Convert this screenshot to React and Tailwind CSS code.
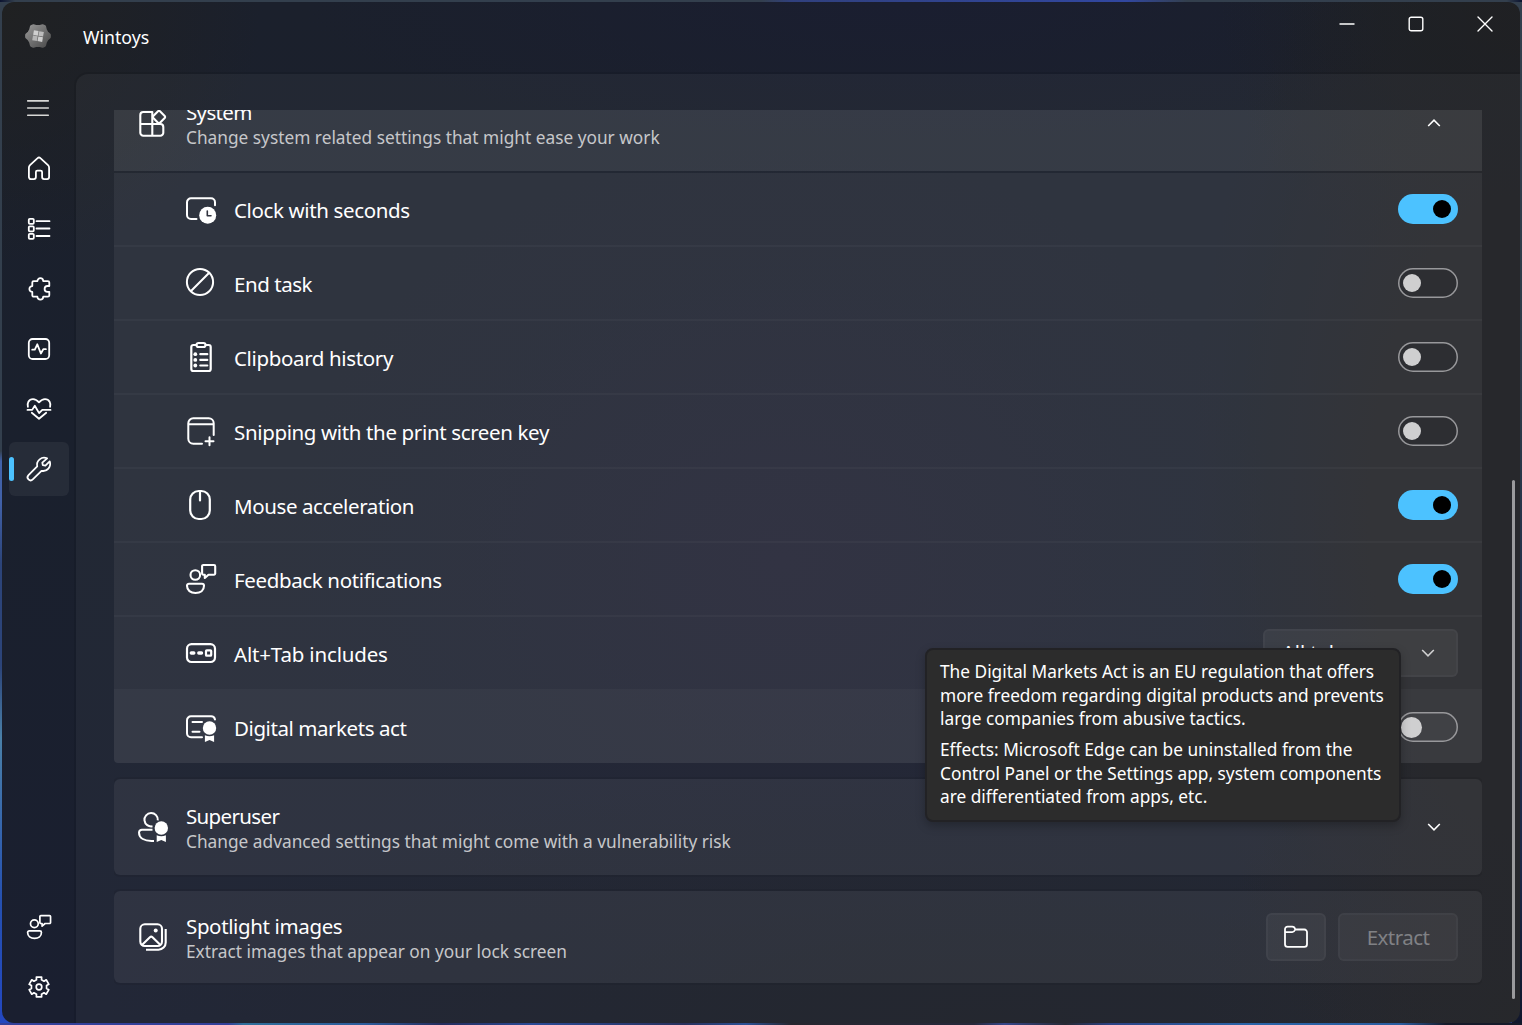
import clsx from 'clsx'

function Icon({ size = 32, box = 32, stroke = 2, className, children }) {
  return (
    <svg
      width={size}
      height={size}
      viewBox={`0 0 ${box} ${box}`}
      fill="none"
      stroke="currentColor"
      strokeWidth={stroke}
      strokeLinecap="round"
      strokeLinejoin="round"
      className={clsx('shrink-0', className)}
    >
      {children}
    </svg>
  )
}

function NavIcon({ children, stroke = 1.8 }) {
  return <Icon size={28} box={28} stroke={stroke}>{children}</Icon>
}

// Six-toothed gear outline around (cx, cy)
function gearPath(cx, cy, outer, inner, start, tip, root) {
  const points = []
  for (let i = 0; i < 6; i++) {
    const mid = start + i * 60
    const corners = [[mid - root, inner], [mid - tip, outer], [mid + tip, outer], [mid + root, inner]]
    corners.forEach(([deg, r]) => {
      const a = (deg * Math.PI) / 180
      points.push(`${(cx + r * Math.cos(a)).toFixed(2)} ${(cy + r * Math.sin(a)).toFixed(2)}`)
    })
  }
  return `M${points.join('L')}Z`
}

/* ---------- row icons ---------- */

const ClockIcon = () => (
  <Icon>
    <path d="M11.5 26H6a4 4 0 0 1-4-4V9.3a4 4 0 0 1 4-4h20a4 4 0 0 1 4 4v3" />
    <circle cx="22.7" cy="22.3" r="8.5" fill="currentColor" stroke="none" />
    <path d="M22.3 18v4.8h3.7" stroke="#30333e" strokeWidth="1.6" />
  </Icon>
)

const BlockedIcon = () => (
  <Icon>
    <circle cx="15" cy="15" r="13.1" />
    <path d="M6 24 24.2 5.8" />
  </Icon>
)

const ClipboardIcon = () => (
  <Icon stroke={2.2}>
    <path d="M11 4H8.3a2 2 0 0 0-2 2v22a2 2 0 0 0 2 2h15.4a2 2 0 0 0 2-2V6a2 2 0 0 0-2-2H21" />
    <rect x="11.5" y="2" width="9" height="4" rx="2" />
    <path d="M15.3 13.2h7M15.3 18.9h7M15.3 24.5h7" />
    <g fill="currentColor" stroke="none">
      <circle cx="10.3" cy="13.2" r="1.9" />
      <circle cx="10.3" cy="18.9" r="1.9" />
      <circle cx="10.3" cy="24.5" r="1.9" />
    </g>
  </Icon>
)

const SnipIcon = () => (
  <Icon>
    <path d="M17 28.7H8.3a5 5 0 0 1-5-5V8.3a5 5 0 0 1 5-5h15.4a5 5 0 0 1 5 5V20M3.3 9.3h25.4" />
    <path d="M24.5 22.3v8M20.5 26.3h8" />
  </Icon>
)

const MouseIcon = () => (
  <Icon stroke={2.2}>
    <rect x="5.2" y="2" width="19.6" height="28" rx="8.5" />
    <path d="M15 2.5v9" />
  </Icon>
)

function FeedbackIcon({ size = 32 }) {
  return (
    <Icon size={size} stroke={2.1}>
      <circle cx="10.3" cy="12" r="4.8" />
      <path d="M4 20.7h13a2 2 0 0 1 2 2c0 4.6-3.6 7.3-8.5 7.3S2 27.3 2 22.7a2 2 0 0 1 2-2z" />
      <path d="M18.3 2H29a1.2 1.2 0 0 1 1.2 1.2v7.3a1.2 1.2 0 0 1-1.2 1.2h-5.5L19.8 15v-3.3h-1.5a1.2 1.2 0 0 1-1.2-1.2V3.2A1.2 1.2 0 0 1 18.3 2z" />
    </Icon>
  )
}

const AltTabIcon = () => (
  <Icon stroke={2.2}>
    <rect x="2" y="7.2" width="28" height="17.8" rx="4.5" />
    <path d="M6.3 16h2.5M13.8 16h2.7" strokeWidth="3.4" />
    <rect x="21" y="13.3" width="5.2" height="5.4" rx=".8" />
  </Icon>
)

function Ribbon({ cx }) {
  return (
    <g fill="currentColor" stroke="none">
      <circle cx={cx} cy="17" r="6.7" />
      <path d={`M${cx - 4.6} 24.3q4.6 1.8 9.2 0v6.6l-4.6-2-4.6 2z`} />
    </g>
  )
}

const CertificateIcon = () => (
  <Icon>
    <path d="M17 26.3H6a4 4 0 0 1-4-4v-13a4 4 0 0 1 4-4h20a4 4 0 0 1 4 3.2" />
    <path d="M7.5 11H17M7.5 20.7h7" />
    <Ribbon cx={24.5} />
  </Icon>
)

/* ---------- card icons ---------- */

const AppsIcon = () => (
  <Icon stroke={2.1}>
    <path d="M15.3 5h-9a3 3 0 0 0-3 3v17.7a3 3 0 0 0 3 3h17a3 3 0 0 0 3-3V20a3 3 0 0 0-3-3h-20M15.3 5v23.7" />
    <path d="m21 4.3-4.7 4.7a1.4 1.4 0 0 0 0 2l4.7 4.7a1.4 1.4 0 0 0 2 0l4.7-4.7a1.4 1.4 0 0 0 0-2L23 4.3a1.4 1.4 0 0 0-2 0z" />
  </Icon>
)

const SuperuserIcon = () => (
  <Icon>
    <path d="M15.5 15.3a6.7 6.7 0 1 1 5.3-6" strokeLinecap="butt" />
    <path d="M15.5 18.8H5a3 3 0 0 0-3 2.7c0 6 6 8.5 12.5 8.5H17" strokeLinecap="butt" />
    <Ribbon cx={24.3} />
  </Icon>
)

const ImagesIcon = () => (
  <Icon stroke={2.1}>
    <rect x="3.3" y="3.3" width="21.7" height="21.7" rx="4.5" />
    <path d="m5.2 23.8 7.7-7.6a1.9 1.9 0 0 1 2.6 0l7.7 7.6" />
    <circle cx="18.7" cy="9.6" r="2" fill="currentColor" stroke="none" />
    <path d="M28.7 8v13.5a7.2 7.2 0 0 1-7.2 7.2H9" strokeLinecap="butt" />
  </Icon>
)

const FolderIcon = () => (
  <NavIcon>
    <path d="M3 9.1V6.3a2.6 2.6 0 0 1 2.6-2.6h4.6c1.6 0 2.5.6 3.1 2.8h9.1A2.6 2.6 0 0 1 25 9.1v12.2a2.6 2.6 0 0 1-2.6 2.6H5.6A2.6 2.6 0 0 1 3 21.3V9.1h7.3c1.5 0 2.3-1 3-2.6" />
  </NavIcon>
)

function Chevron({ up, className }) {
  return (
    <svg
      width="14"
      height="14"
      viewBox="0 0 14 14"
      fill="none"
      stroke="currentColor"
      strokeWidth="1.6"
      className={clsx('shrink-0', className)}
    >
      <path d={up ? 'M1.2 10 7 4.2l5.8 5.8' : 'M1.2 4 7 9.8 12.8 4'} />
    </svg>
  )
}

/* ---------- navigation ---------- */

const HomeIcon = () => (
  <NavIcon>
    <path d="M12.6 3.2a2 2 0 0 1 2.8 0l7.6 6.9a3.5 3.5 0 0 1 1.1 2.6v9.4a2 2 0 0 1-2 2h-3a2 2 0 0 1-2-2v-5a1.5 1.5 0 0 0-1.5-1.5h-3.2a1.5 1.5 0 0 0-1.5 1.5v5a2 2 0 0 1-2 2h-3a2 2 0 0 1-2-2v-9.4A3.5 3.5 0 0 1 5 10.1z" />
  </NavIcon>
)

const ListIcon = () => (
  <NavIcon>
    <rect x="3.8" y="3.8" width="5" height="5" rx="1" />
    <rect x="3.8" y="11.3" width="5" height="5" rx="1" />
    <rect x="3.8" y="18.8" width="5" height="5" rx="1" />
    <path d="M11.5 6.2h13M11.5 13.5h13M11.5 21h13" />
  </NavIcon>
)

const PuzzleIcon = () => (
  <NavIcon>
    <path d="M12.4 6.1a2.9 2.9 0 0 1 5.8 0h4.6a1.5 1.5 0 0 1 1.5 1.5v3.4h-1.800a2.900 2.900 0 0 0 0 5.800h1.800v3.400a1.500 1.500 0 0 1-1.500 1.500h-4.600a2.900 2.900 0 1 1-5.800 0H8.800a1.500 1.500 0 0 1-1.500-1.500v-3.300a2.900 2.900 0 0 1 0-5.800V7.600a1.500 1.500 0 0 1 1.500-1.500z" />
  </NavIcon>
)

const PulseIcon = () => (
  <NavIcon>
    <rect x="3.8" y="4" width="20.4" height="20" rx="3.8" />
    <path d="M7.2 14.7h2.6l2.5-5.4 3.6 9.2 2.4-4.3h2.6" />
  </NavIcon>
)

const HeartIcon = () => (
  <NavIcon>
    <path d="M2.9 11.8C2 8.6 3.4 4.2 8 4.2c3 0 4.6 1.6 6 3.2 1.4-1.6 3-3.2 6-3.2 4.6 0 6 4.4 5.1 7.6" />
    <path d="M2.5 14.9h4.7l2.6-4.2 4.3 7.4 3.2-3.2h8.2" />
    <path d="m6.8 17.8 7.2 5.9 7.2-5.9" />
  </NavIcon>
)

const WrenchIcon = () => (
  <NavIcon>
    <path d="M22.1 3.4a7.1 7.1 0 0 0-9.9 8l-8.7 8.7a3 3 0 0 0 4.3 4.3l8.7-8.6a7.1 7.1 0 0 0 8.2-9.4l-4.3 4.2-2.6-.4-.5-2.6z" />
  </NavIcon>
)

const SettingsIcon = () => (
  <NavIcon stroke={1.7}>
    <path d={gearPath(14, 14, 10.2, 7.7, 30, 15, 19)} />
    <circle cx="14" cy="14" r="2.8" />
  </NavIcon>
)

function NavItem({ active, children }) {
  return (
    <button
      className={clsx(
        'relative flex h-[54px] w-[60px] items-center justify-center rounded-md',
        active && 'bg-white/[.055]'
      )}
    >
      {active && <span className="absolute top-[15px] left-0 h-6 w-[5px] rounded-full bg-[#4cc2ff]" />}
      {children}
    </button>
  )
}

function Sidebar() {
  return (
    <nav className="flex w-[74px] shrink-0 flex-col justify-between pt-[7px] pb-[9px] pl-[7px]">
      <div className="flex flex-col gap-1.5">
        <button className="mb-px flex h-[54px] w-[58px] items-center justify-center text-[#d8d8d6]">
          <Icon size={24} box={24} stroke={1.6}>
            <path d="M1.7 4.9h20.6M1.7 12h20.6M1.7 19.2h20.6" />
          </Icon>
        </button>
        <NavItem><HomeIcon /></NavItem>
        <NavItem><ListIcon /></NavItem>
        <NavItem><PuzzleIcon /></NavItem>
        <NavItem><PulseIcon /></NavItem>
        <NavItem><HeartIcon /></NavItem>
        <NavItem active><WrenchIcon /></NavItem>
      </div>
      <div className="flex flex-col gap-1.5">
        <NavItem><FeedbackIcon size={26} /></NavItem>
        <NavItem><SettingsIcon /></NavItem>
      </div>
    </nav>
  )
}

function Logo() {
  return (
    <svg width="28" height="28" viewBox="0 0 28 28" className="mb-1 shrink-0">
      <defs>
        <linearGradient id="logo" x1="0" y1="0" x2="1" y2="1">
          <stop offset="0" stopColor="#949494" />
          <stop offset="1" stopColor="#4c4c4c" />
        </linearGradient>
      </defs>
      <path
        d={gearPath(14, 14, 11.2, 9.3, 0, 5, 21)}
        fill="url(#logo)"
        stroke="url(#logo)"
        strokeWidth="3.4"
        strokeLinejoin="round"
      />
      <g fill="#cfcfcf" transform="rotate(10 14 14)">
        <rect x="9" y="9" width="4.7" height="4.7" />
        <rect x="14.4" y="9" width="4.7" height="4.7" fill="#bdbdbd" />
        <rect x="9" y="14.4" width="4.7" height="4.7" fill="#b5b5b5" />
        <rect x="14.4" y="14.4" width="4.7" height="4.7" />
      </g>
    </svg>
  )
}

function TitleBar() {
  return (
    <header className="flex h-[72px] shrink-0 justify-between pr-7 pl-[22px]">
      <div className="flex items-center">
        <Logo />
        <span className="mb-0.5 ml-[31px] text-[17.7px]">Wintoys</span>
      </div>
      <div className="mt-[13.5px] -mr-[0.5px] flex gap-[53px]">
        <Icon size={16} box={16} stroke={1.4}><path d="M.5 8h15" strokeLinecap="butt" /></Icon>
        <Icon size={16} box={16} stroke={1.4}><rect x="1.2" y="1.2" width="13.6" height="13.6" rx="2" /></Icon>
        <Icon size={16} box={16} stroke={1.4}><path d="m1 1 14 14M15 1 1 15" /></Icon>
      </div>
    </header>
  )
}

/* ---------- settings ---------- */

function Toggle({ on, hover }) {
  if (on) {
    return (
      <span className="flex h-[30px] w-[60px] items-center justify-end rounded-full bg-[#4cc2ff] pr-[7px]">
        <span className="size-[18px] rounded-full bg-black" />
      </span>
    )
  }
  return (
    <span
      className={clsx(
        'flex h-[30px] w-[60px] items-center rounded-full shadow-[inset_0_0_0_1.5px_#98989b]',
        hover ? 'bg-white/[.04] pl-[3px]' : 'bg-black/10 pl-[5px]'
      )}
    >
      <span className={clsx('rounded-full bg-[#cfcfd0]', hover ? 'size-[21px]' : 'size-[18px]')} />
    </span>
  )
}

function Row({ icon, label, spacing = 'tracking-[-0.36px]', hover, last, children }) {
  return (
    <div
      className={clsx(
        'flex items-center pr-6 pl-[71px]',
        last ? 'h-[72px]' : 'h-[74px] border-b-2 border-white/[.03]',
        hover && 'bg-white/[.03]'
      )}
    >
      {icon}
      <span className={clsx('mt-[3px] ml-[17px] flex-1 text-[20.5px]', spacing)}>{label}</span>
      {children}
    </div>
  )
}

function CardText({ title, text, spacing = 'tracking-[-0.65px]' }) {
  return (
    <div className="mt-[3px] ml-[17px] flex-1">
      <div className={clsx('text-[20.5px] leading-[25px]', spacing)}>{title}</div>
      <div className="text-[17.3px] leading-[25px] text-[#c6c7ca]">{text}</div>
    </div>
  )
}

function Tooltip() {
  return (
    <div className="absolute top-[538px] left-[811px] h-[174px] w-[476px] rounded-lg border-2 border-[#222225] bg-[#2c2c2c] pt-2.5 pl-[13px] text-[17.3px] leading-[23.5px] whitespace-nowrap shadow-[0_4px_10px_rgba(0,0,0,.25)]">
      <p>
        The Digital Markets Act is an EU regulation that offers<br />
        more freedom regarding digital products and prevents<br />
        large companies from abusive tactics.
      </p>
      <p className="mt-[7.5px]">
        Effects: Microsoft Edge can be uninstalled from the<br />
        Control Panel or the Settings app, system components<br />
        are differentiated from apps, etc.
      </p>
    </div>
  )
}

function SystemGroup() {
  return (
    <section>
      <div className="-mt-[35px] flex h-24 items-center bg-white/[.09] pr-[41px] pl-[23px]">
        <AppsIcon />
        <CardText title="System" text="Change system related settings that might ease your work" />
        <Chevron up />
      </div>
      <div className="mt-0.5 overflow-hidden rounded-b-[4px] bg-white/[.06]">
        <Row icon={<ClockIcon />} label="Clock with seconds"><Toggle on /></Row>
        <Row icon={<BlockedIcon />} label="End task" spacing="tracking-[-0.45px]"><Toggle /></Row>
        <Row icon={<ClipboardIcon />} label="Clipboard history"><Toggle /></Row>
        <Row icon={<SnipIcon />} label="Snipping with the print screen key"><Toggle /></Row>
        <Row icon={<MouseIcon />} label="Mouse acceleration" spacing="tracking-[-0.4px]"><Toggle on /></Row>
        <Row icon={<FeedbackIcon />} label="Feedback notifications"><Toggle on /></Row>
        <Row icon={<AltTabIcon />} label="Alt+Tab includes" spacing="tracking-[-0.17px]">
          <button className="flex h-12 w-[195px] items-center justify-between rounded-md border-2 border-white/[.03] bg-white/[.055] pr-[21px] pl-[17px] text-[20px]">
            All tabs
            <Chevron className="text-[#cfcfd0]" />
          </button>
        </Row>
        <Row icon={<CertificateIcon />} label="Digital markets act" spacing="tracking-[-0.43px]" hover last>
          <Toggle hover />
        </Row>
      </div>
    </section>
  )
}

const card = 'mt-4 flex items-center rounded-md bg-white/[.06] pl-[23px] shadow-[0_0_0_2px_rgba(0,0,0,.06)]'

export default function App() {
  return (
    <div className="h-[1025px] w-[1522px] overflow-hidden bg-[linear-gradient(90deg,#33409a_0%,#33409a_15%,#2f6f9a_16%,#2c5c9c_24%,#242c5c_29%,#2a4a96_35%,#28305c_45%,#2b5196_49%,#26262f_52%,#26283a_64%,#35468a_66%,#262833_70%,#2b4285_73%,#2a64a8_82%,#2a5da0_92%,#161a2a_95%),linear-gradient(90deg,#0b1330_0%,#333f4d_1%,#333f4d_50%,#30407e_52%,#3147a0_74%,#333f4d_78%,#333f4d_99%,#0b1330_100%),linear-gradient(180deg,#333f4d_0%,#2c3947_40%,#22304c_60%,#1c2846_85%,#10162c_100%),linear-gradient(180deg,#333f4d_0%,#333f4d_44%,#4161a8_45%,#4161a8_49%,#2c4479_55%,#2c4479_65%,#4a80a8_72%,#2550b0_88%,#2347c0_100%)] bg-[length:100%_2px,100%_2px,10px_100%,100%_100%] bg-[position:0_100%,0_0,100%_0,0_0] bg-no-repeat p-0.5 font-['Noto_Sans','Open_Sans',sans-serif] text-white">
      <div className="flex h-full flex-col overflow-hidden rounded-xl bg-[radial-gradient(circle_at_0_0,#202122_0,transparent_260px),radial-gradient(ellipse_330px_700px_at_100%_50%,#1f2024_0,#1f2024_45%,transparent_100%),radial-gradient(circle_at_100%_0,#202122_0,transparent_300px),radial-gradient(circle_at_100%_100%,#1f2023_0,transparent_320px),radial-gradient(ellipse_900px_260px_at_1000px_100%,#1c1f27_0,transparent_100%),radial-gradient(ellipse_600px_140px_at_900px_0,#1a1e30_0,transparent_100%),radial-gradient(ellipse_500px_420px_at_780px_560px,#1e1f31_0,transparent_100%),linear-gradient(180deg,#1b202c,#1a202d_45%,#1a1f30)]">
        <TitleBar />
        <div className="flex min-h-0 flex-1">
          <Sidebar />
          <main className="flex flex-1 rounded-tl-xl bg-white/[.035] pt-9 pl-[38px] shadow-[0_0_0_2px_rgba(0,0,0,.08)]">
            <div className="relative w-[1368px]">
              <div className="h-[890px] overflow-hidden">
                <div className="flow-root">
                  <SystemGroup />
                </div>
                <section className={clsx(card, 'h-24 pr-[41px]')}>
                  <SuperuserIcon />
                  <CardText title="Superuser" text="Change advanced settings that might come with a vulnerability risk" />
                  <Chevron />
                </section>
                <section className={clsx(card, 'h-[92px] pr-6')}>
                  <ImagesIcon />
                  <CardText
                    title="Spotlight images"
                    text="Extract images that appear on your lock screen"
                    spacing="tracking-[-0.37px]"
                  />
                  <button className="flex h-12 w-[60px] items-center justify-center rounded-md border-2 border-white/[.03] bg-white/[.05]">
                    <FolderIcon />
                  </button>
                  <button className="ml-3 h-12 w-[120px] rounded-md border-2 border-white/[.03] bg-white/[.04] text-[20.5px] tracking-[-0.55px] text-[#808185]">
                    Extract
                  </button>
                </section>
              </div>
              <Tooltip />
            </div>
            <div className="mt-[370px] ml-[30px] h-[519px] w-[3px] rounded-full bg-[#9a9a9d]" />
          </main>
        </div>
      </div>
    </div>
  )
}
